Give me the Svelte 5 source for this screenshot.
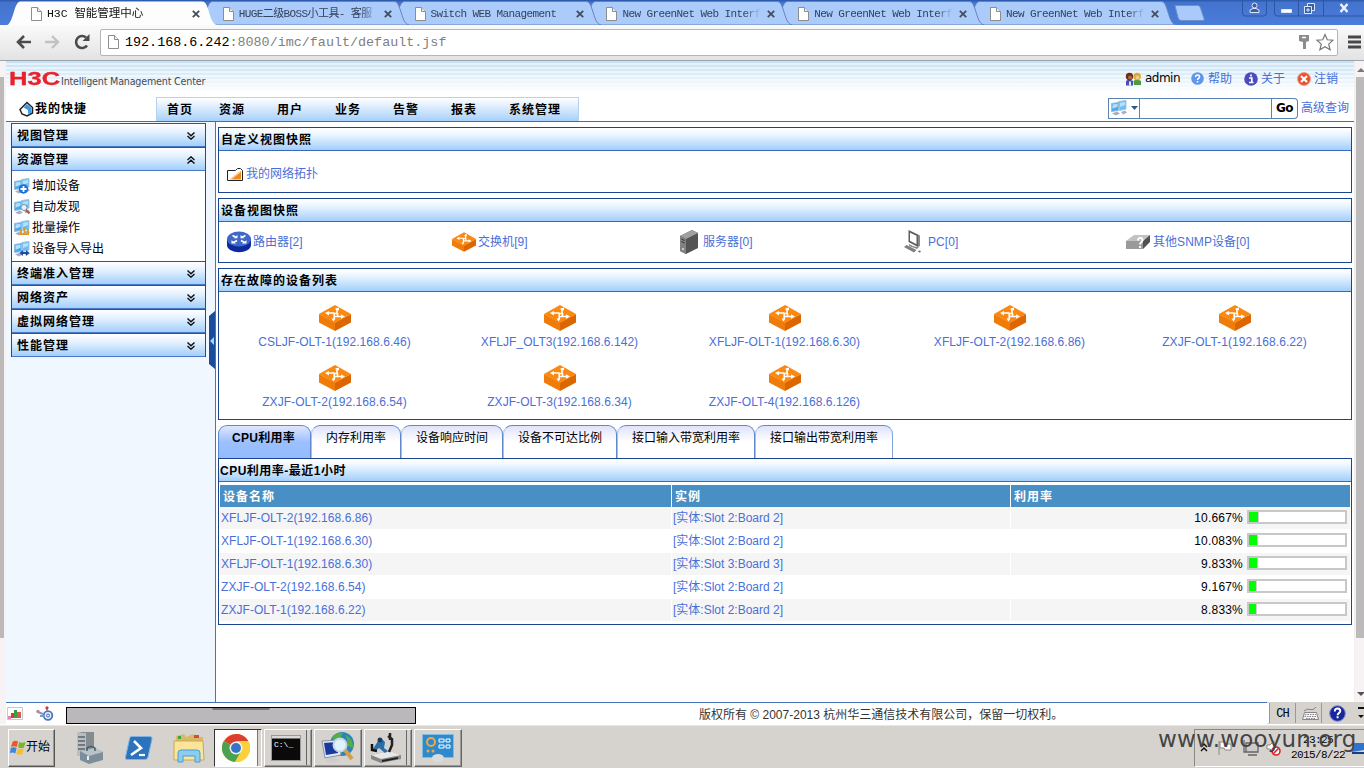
<script>
  const browserTabs = [
    { title: 'H3C 智能管理中心', active: true },
    { title: 'HUGE二级BOSS小工具- 客服' },
    { title: 'Switch WEB Management' },
    { title: 'New GreenNet Web Interf' },
    { title: 'New GreenNet Web Interf' },
    { title: 'New GreenNet Web Interf' }
  ];
  const menu = [
    { label: '首页', gap: 26 },
    { label: '资源', gap: 32 },
    { label: '用户', gap: 32 },
    { label: '业务', gap: 32 },
    { label: '告警', gap: 32 },
    { label: '报表', gap: 32 },
    { label: '系统管理', gap: 0 }
  ];
  const groups = [
    { title: '视图管理' },
    {
      title: '资源管理',
      items: [
        { label: '增加设备', kind: 'add' },
        { label: '自动发现', kind: 'find' },
        { label: '批量操作', kind: 'batch' },
        { label: '设备导入导出', kind: 'io' }
      ]
    },
    { title: '终端准入管理' },
    { title: '网络资产' },
    { title: '虚拟网络管理' },
    { title: '性能管理' }
  ];
  const views = [
    { label: '路由器[2]', kind: 'router' },
    { label: '交换机[9]', kind: 'switch' },
    { label: '服务器[0]', kind: 'server' },
    { label: 'PC[0]', kind: 'pc' },
    { label: '其他SNMP设备[0]', kind: 'other' }
  ];
  const faults = [
    'CSLJF-OLT-1(192.168.6.46)',
    'XFLJF_OLT3(192.168.6.142)',
    'XFLJF-OLT-1(192.168.6.30)',
    'XFLJF-OLT-2(192.168.6.86)',
    'ZXJF-OLT-1(192.168.6.22)',
    'ZXJF-OLT-2(192.168.6.54)',
    'ZXJF-OLT-3(192.168.6.34)',
    'ZXJF-OLT-4(192.168.6.126)'
  ];
  const perfTabs = [
    { label: 'CPU利用率', w: 93 },
    { label: '内存利用率', w: 90 },
    { label: '设备响应时间', w: 102 },
    { label: '设备不可达比例', w: 114 },
    { label: '接口输入带宽利用率', w: 138 },
    { label: '接口输出带宽利用率', w: 138 }
  ];
  const rows = [
    { name: 'XFLJF-OLT-2(192.168.6.86)', inst: '[实体:Slot 2:Board 2]', v: '10.667' },
    { name: 'XFLJF-OLT-1(192.168.6.30)', inst: '[实体:Slot 2:Board 2]', v: '10.083' },
    { name: 'XFLJF-OLT-1(192.168.6.30)', inst: '[实体:Slot 3:Board 3]', v: '9.833' },
    { name: 'ZXJF-OLT-2(192.168.6.54)', inst: '[实体:Slot 2:Board 2]', v: '9.167' },
    { name: 'ZXJF-OLT-1(192.168.6.22)', inst: '[实体:Slot 2:Board 2]', v: '8.833' }
  ];
</script>

{#snippet page()}
  <svg class="page-ico" width="11" height="14" viewBox="0 0 11 14"><path d="M.5.5h6l4 4v9H.5z" fill="#fff" stroke="#8d8d8d" /><path d="M6.5.5v4h4" fill="#eee" stroke="#8d8d8d" /></svg>
{/snippet}

{#snippet switchIcon(w, h)}
  <svg width={w} height={h} viewBox="0 0 32 26">
    <path d="M0 9 16 17.500V26L0 17.500z" fill="#ef7c08" />
    <path d="M32 9 16 17.500V26l16-8.500z" fill="#dc6602" />
    <path d="M16 0 32 9 16 18 0 9z" fill="#fb8810" />
    <path d="M18 3v5.500M8 8h7.500M15.200 8v6M16 11.500h7M15 8.500h4M18.500 8v4" fill="none" stroke="#fff" stroke-width="1.600" />
    <path d="M15.500 4 20 2.500v3zM10 6v4.500L6 8zM22 9.300v4.500l4-2.300zM12.500 13.500h4l-2 3z" fill="#fff" />
  </svg>
{/snippet}

{#snippet deviceIcon(kind)}
  {#if kind === 'router'}
    <svg width="26" height="22" viewBox="0 0 26 22">
      <path d="M1 8v6c0 9.500 24 9.500 24 0V8z" fill="#0e2a9c" />
      <ellipse cx="13" cy="8" rx="12" ry="7.500" fill="#4168c8" />
      <path d="M6.500 4.500l4 2M19.500 4.500l-4 2M7.500 11.500l3.500-2M18.500 11.500l-3.500-2" stroke="#fff" stroke-width="1.600" />
      <path d="M11.500 4v3.300H7.500zM14.500 4v3.300h4zM5.500 9.300v3.200h4.500zM20.500 9.300v3.200H16z" fill="#fff" />
    </svg>
  {:else if kind === 'switch'}
    {@render switchIcon(24, 20)}
  {:else if kind === 'server'}
    <svg width="20" height="24" viewBox="0 0 20 24">
      <path d="M1 6 13 0l6 3v15L7 24l-6-3z" fill="#545454" /><path d="M1 6 13 0l6 3L7 9z" fill="#a0a0a0" />
      <path d="M1 6l6 3v15l-6-3z" fill="#828282" /><path d="M2.500 9l3 1.500M2.500 11.500l3 1.500" stroke="#333" />
      <circle cx="4" cy="19" r="1" fill="#ddd" />
    </svg>
  {:else if kind === 'pc'}
    <svg width="22" height="24" viewBox="0 0 22 24">
      <path d="M5.500 0 15 4.500V17L5.500 12z" fill="#5e5e5e" /><path d="M7 2.800l6.500 3v8.500L7 10.800z" fill="#fff" />
      <path d="M15 4.500l2 1V16l-2 1zM6 14l5 2.500 5 .5-2 2-8-3z" fill="#8a8a8a" />
      <path d="M1 17l2.500-2 10 5-2.500 2.500z" fill="#808080" /><path d="M15 21l2-.5 1 1.500-2 .5z" fill="#666" />
    </svg>
  {:else}
    <svg width="25" height="16" viewBox="0 0 25 16">
      <path d="M0 7 8 1h16l-7 6z" fill="#c2c2c2" /><path d="M0 7h17v8H0z" fill="#9a9a9a" /><path d="M17 7l7-6v7l-7 7z" fill="#505050" />
      <path d="M12 6.500c0-4 5-3 4.500 0-.2 2-2.500 1.500-2.500 4m0 1.500v2" stroke="#fff" stroke-width="1.800" fill="none" />
    </svg>
  {/if}
{/snippet}

{#snippet pairIcon(kind)}
  <svg width="17" height="16" viewBox="0 0 17 16">
    <path d="M7.500 1.500 15 .5v8.500l-6.500 1.500z" fill="#6dbcf2" stroke="#9fc6e2" />
    <path d="M.5 3.500 7.500 2.500v8l-7 1z" fill="#4aa8ee" stroke="#93bfe0" />
    <path d="M1.500 4.500l5-.8v3l-5 2zM9 2.800l5-.8v3l-5 2z" fill="#b3e0fb" />
    <path d="M1 13.500l5-2 3 2-4 2zM10 12l4-1.500 2 2-4 2z" fill="#a9adc4" />
    {#if kind === 'add'}
      <circle cx="9.500" cy="11" r="4.700" fill="#1670de" /><path d="M9.500 8v6M6.500 11h6" stroke="#fff" stroke-width="1.800" />
    {:else if kind === 'find'}
      <circle cx="10" cy="8.500" r="3" fill="#e3f4ff" stroke="#7991a6" /><path d="M12 11l3.500 3.500" stroke="#c0522d" stroke-width="2" />
    {:else if kind === 'batch'}
      <path d="M7 9v5M10.500 7v7M14 9v5M6 14h9" stroke="#e19b2b" stroke-width="2" />
    {:else if kind === 'io'}
      <path d="M5.500 12 9 9v2h3V9l3.500 3-3.500 3v-2H9v2z" fill="#234ca0" />
    {/if}
  </svg>
{/snippet}

<div class="screen">
  <div class="tabstrip">
    <div class="tabs">
      {#each browserTabs as t, i}
        <div class="btab" class:active={t.active} style:z-index={10 - i}>
          <svg class="shape" width="212" height="25" viewBox="0 0 212 25">
            <path d="M0 25C5 24 7 8 10 4 11.500 1.500 13 1.500 15 1.500H194C197 1.500 198 2 199.500 5 203 13 204 24 210 25z" fill={t.active ? '#fdfdfd' : '#abcbfa'} stroke={t.active ? 'none' : '#6283c0'} />
          </svg>
          {@render page()}
          <span class="btitle">{t.title}</span>
          <svg class="x" width="8" height="8" viewBox="0 0 8 8"><path d="M.8.8l6.400 6.400M7.200.8.8 7.200" stroke="#444c5c" stroke-width="1.800" /></svg>
        </div>
      {/each}
      <svg class="newtab" width="32" height="16" viewBox="0 0 32 16"><path d="M1 .5h22c3 0 3 1 4 4l3 9c.3 1.500 0 2-1 2H8c-2 0-3-.5-4-3z" fill="#a9cafa" stroke="#6d90cc" /></svg>
    </div>
    <div class="winbtns">
      <svg width="122" height="20" viewBox="0 0 122 20" fill="none" stroke="#2c55a3">
        <path d="M.5 0v13q0 3 3 3h18q3 0 3-3V0M32.500 0v13q0 3 3 3H122M56.500 0v16M81.500 0v16" />
        <g stroke="#dce8fb" fill="#3d5e9c"><path d="M8 12.500v-2.500l3-1.500h3l3 1.500v2.500z" /><circle cx="12.500" cy="5.500" r="2.500" /><path d="M39.500 9.500h10v3h-10z" fill="#fff" /><path d="M65.500 3.500h7v7h-7z" /><path d="M62.500 6.500h7v7h-7zM65 9h2v2h-2z" /></g>
        <path d="M98.500 4l7 8M105.500 4l-7 8" stroke="#eaf2ff" stroke-width="2.500" />
      </svg>
    </div>
  </div>

  <div class="toolbar">
    <svg class="nav" width="76" height="16" viewBox="0 0 76 16" fill="none">
      <path d="M15 8H2M8 2 2 8l6 6" stroke="#4b4b4b" stroke-width="2.600" /><path d="M29 8h13M36 2l6 6-6 6" stroke="#c2c2c2" stroke-width="2.400" />
      <path d="M71 11.500A6 6 0 1 1 70 3.500" stroke="#4b4b4b" stroke-width="2.600" /><path d="M73.500 0v7h-7z" fill="#4b4b4b" />
    </svg>
    <div class="omnibox">
      {@render page()}
      <span class="url">192.168.6.242<i>:8080/imc/fault/default.jsf</i></span>
      <svg width="38" height="19" viewBox="0 0 38 19"><path d="M3 2h10v6l-3 1v7H7V9L3 8z" fill="#8c8c8c" /><path d="M6 4.500h4" stroke="#fff" stroke-width="1.500" /><path d="M29 1.500l2.300 5.300 5.700.4-4.300 3.900 1.400 5.700-5.100-3.100-5.100 3.100 1.400-5.700L21 7.200l5.700-.4z" fill="#fff" stroke="#777" stroke-width="1.200" /></svg>
    </div>
    <svg class="burger" width="14" height="14" viewBox="0 0 14 14"><path d="M1 2h13M1 7h13M1 12h13" stroke="#484848" stroke-width="2.800" /></svg>
  </div>

  <div class="viewport">
    <div class="edge left"><div class="thumb"></div><div class="rest"></div></div>
    <div class="app">
      <header>
        <div class="brandrow">
          <div class="brand"><b><span>H3C</span></b><em>Intelligent Management Center</em></div>
          <div class="user">
            <svg width="17" height="14" viewBox="0 0 17 14"><path d="M1 9q3-3 7 0v4.500H1z" fill="#4b4fb5" /><path d="M8.500 9q3-3 7.500 0v4H9z" fill="#4c9c3c" /><circle cx="4.500" cy="4.500" r="3.700" fill="#64301c" /><circle cx="5" cy="5.500" r="2" fill="#b5693a" /><circle cx="12.200" cy="4.500" r="3.700" fill="#dea62a" /><circle cx="12.500" cy="5.500" r="2" fill="#f3c98a" /><path d="M4 9.500h2v4H4z" fill="#dfe7ff" /></svg>
            <span class="admin">admin</span>
            <svg width="13" height="13" viewBox="0 0 13 13"><circle cx="6.500" cy="6.500" r="6.300" fill="#5f97ea" /><path d="M4.500 5c0-3 4.500-2.500 4 0-.3 1.500-2 1.200-2 3m0 1v1.500" stroke="#fff" stroke-width="1.500" fill="none" /></svg>
            <a class="a1" href="#top">帮助</a>
            <svg width="14" height="14" viewBox="0 0 14 14"><circle cx="7" cy="7" r="6.800" fill="#4b4bbd" /><path d="M5 6h2.800v4M5 10.500h4.500M7 2.500v2" stroke="#fff" stroke-width="1.700" fill="none" /></svg>
            <a class="a2" href="#top">关于</a>
            <svg width="14" height="14" viewBox="0 0 14 14"><circle cx="7" cy="7" r="6.500" fill="#e8512f" stroke="#f3a08b" /><path d="M4 4l6 6M10 4l-6 6" stroke="#fff" stroke-width="2.200" /></svg>
            <a class="a3" href="#top">注销</a>
          </div>
        </div>
        <div class="menurow">
          <div class="quick">
            <svg width="15" height="16" viewBox="0 0 15 16"><path d="M1 8.500 8 1.500l5.500 5v5.500L8 15l-5-2z" fill="#fff" stroke="#222" stroke-width="1.500" /><path d="M8 3 12.500 7v4.500L9 13V9L4.500 6.500z" fill="#3a9be8" /></svg>
            <b>我的快捷</b>
          </div>
          <nav>{#each menu as m}<b style:margin-right="{m.gap}px">{m.label}</b>{/each}</nav>
          <div class="search">
            <div class="pick">{@render pairIcon('')}<svg width="7" height="4" viewBox="0 0 7 4"><path d="M0 0h7L3.500 4z" fill="#2b5a8a" /></svg></div>
            <div class="field"></div>
            <div class="go">Go</div>
            <a href="#top">高级查询</a>
          </div>
        </div>
      </header>

      <div class="body">
        <aside>
          <div class="acc">
            {#each groups as g}
              <div class="ghead"><b>{g.title}</b>
                <svg width="8" height="8" viewBox="0 0 8 8" fill="none" stroke="#111" stroke-width="1.400">
                  {#if g.items}<path d="M.5 4 4 .8 7.500 4M.5 7.500 4 4.300l3.500 3.200" />{:else}<path d="M.5.5 4 3.700 7.500.5M.5 4 4 7.200 7.500 4" />{/if}
                </svg>
              </div>
              {#if g.items}
                <div class="gitems">
                  {#each g.items as it}<div class="gi">{@render pairIcon(it.kind)}<span>{it.label}</span></div>{/each}
                </div>
              {/if}
            {/each}
          </div>
          <svg class="handle" width="6" height="58" viewBox="0 0 6 58"><path d="M0 5 6 0v58L0 53z" fill="#1a4b9c" /><path d="M5 26v8L1 30z" fill="#8fe1ff" /></svg>
        </aside>

        <main>
          <section class="p1">
            <h2>自定义视图快照</h2>
            <div class="topo">
              <svg width="16" height="13" viewBox="0 0 16 13"><path d="M.5 2.500h8l2-2h3l2 2v10H.5z" fill="#fff" stroke="#222" /><path d="M14 3v8.500H4z" fill="#ee8a1f" /><path d="M3 11.500 13 4" stroke="#f9cf9a" stroke-width="1.500" /></svg>
              <a href="#top">我的网络拓扑</a>
            </div>
          </section>
          <section class="p2">
            <h2>设备视图快照</h2>
            <div class="views">
              {#each views as v}<div class="view"><span class="vi">{@render deviceIcon(v.kind)}</span><a href="#top">{v.label}</a></div>{/each}
            </div>
          </section>
          <section class="p3">
            <h2>存在故障的设备列表</h2>
            <div class="faults">
              {#each faults as f}<div class="fault">{@render switchIcon(32, 26)}<a class="lat" href="#top">{f}</a></div>{/each}
            </div>
          </section>
          <div class="ptabs">
            {#each perfTabs as t, i}<div class="ptab" class:on={i === 0} style:width="{t.w}px">{t.label}</div>{/each}
          </div>
          <section class="p4">
            <h2>CPU利用率-最近1小时</h2>
            <div class="grid">
              <div class="th">设备名称</div><div class="th">实例</div><div class="th">利用率</div>
              {#each rows as r, i}
                <div class="td" class:odd={i % 2 === 0}><a class="lat" href="#top">{r.name}</a></div>
                <div class="td" class:odd={i % 2 === 0}><a href="#top">{r.inst}</a></div>
                <div class="td val" class:odd={i % 2 === 0}><span>{r.v}%</span><div class="bar"><div class="fill" style:width="{parseFloat(r.v) * 0.8}px"></div></div></div>
              {/each}
            </div>
          </section>
        </main>
      </div>

      <footer>
        <svg class="f1" width="16" height="13" viewBox="0 0 16 13"><path d="M.5.5h15v12H.5z" fill="#fff" stroke="#c9c9c9" /><path d="M1 9h3v3H1z" fill="#d06" opacity=".5" /><path d="M4 6h3v5H4z" fill="#d73b32" /><path d="M7 3h3v8H7z" fill="#3b9d46" /><path d="M10 5h4v6h-4z" fill="#d85b4b" /></svg>
        <svg class="f2" width="18" height="15" viewBox="0 0 18 15"><circle cx="12" cy="9.500" r="4.300" fill="#e6eefb" stroke="#4a74bd" stroke-width="1.800" /><circle cx="12" cy="9.500" r="1.500" fill="none" stroke="#3f68b0" /><path d="M2 6l5 2M11 2v3M4 10h4" stroke="#7d97c8" stroke-width="2" /><circle cx="11" cy="1.800" r="1.600" fill="#d33" /><circle cx="2" cy="5.500" r="1.700" fill="#b88a9a" /></svg>
        <div class="censor"><i></i></div>
        <span class="copy">版权所有 © 2007-2013 杭州华三通信技术有限公司，保留一切权利。</span>
      </footer>
    </div>
    <div class="edge right">
      <svg width="9" height="16" viewBox="0 0 9 16"><path d="M2 11h8L6 7z" fill="#777" /></svg>
      <div class="thumb"></div><div class="rest"></div>
      <svg width="9" height="11" viewBox="0 0 9 11"><path d="M2 1h8L6 5z" fill="#555" /></svg>
    </div>
    <div class="lang">
      <i></i><span>CH</span>
      <div class="kb"><svg width="17" height="16" viewBox="0 0 17 16" fill="none" stroke="#858585"><path d="M2.500 7.500h12l2 7H.5z" fill="#f4f4f4" /><path d="M3 9.500h11M2.500 11.500h12M4 13.500h9" stroke-dasharray="1.500 1" /><path d="M2 6q3-3 6-1.500T14 2" /></svg></div>
      <svg class="q" width="17" height="17" viewBox="0 0 17 17"><circle cx="8.500" cy="8.500" r="7.800" fill="#16269c" stroke="#7b88d6" /><path d="M5.800 6.500c0-4.500 6-3.500 5.400-.3-.4 1.800-2.600 1.800-2.600 4m0 1v2" stroke="#fff" stroke-width="2" fill="none" /></svg>
      <svg class="m" width="8" height="16" viewBox="0 0 8 16"><path d="M2 2h6v2H2zM2 10h6L5 13z" fill="#111" /></svg>
    </div>
  </div>

  <div class="taskbar">
    <div class="start">
      <svg width="16" height="15" viewBox="0 0 16 15"><path d="M2.500 2q3-2 5.500-.5L6.800 7Q4 5.500 1 7z" fill="#e8582a" /><path d="M9 2q3 1.500 6.500 0L14 7.500q-3 1.500-6 0z" fill="#79b530" /><path d="M.8 8q3-1.500 5.800 0l-1.300 5.500Q3 12 0 13z" fill="#3a87dc" /><path d="M7.800 8.500q3 1.500 6 0l-1.500 5.500q-3 1.500-6 0z" fill="#f8bf24" /></svg>
      <span>开始</span>
    </div>
    <div class="slot">
      <svg width="30" height="32" viewBox="0 0 30 32"><path d="M3 1 9 0h11v21l-6 3H3z" fill="#848b91" /><path d="M3 1h9v23H3z" fill="#b9bec2" /><path d="M4 5h7M4 9h7M4 13h7M4 17h7" stroke="#5b646c" stroke-width="1.500" /><path d="M6 19l15-3 8 4v8l-14 4-9-4z" fill="#7d8e9a" /><path d="M6 19l15-3 8 4-14 4z" fill="#b6c3cb" /><path d="M13 19v-3q4-3 8 0v3" fill="none" stroke="#4b5962" stroke-width="1.500" /><path d="M14 24v4" stroke="#eee" stroke-width="2" /></svg>
    </div>
    <div class="slot">
      <svg width="28" height="24" viewBox="0 0 28 24"><path d="M6 .5h19q2.500 0 2 2.500l-4 18q-.5 2.500-3 2.500H2Q0 23.500.5 21l4-18Q5 .5 6 .5z" fill="#2b74bb" stroke="#7fb4e2" /><path d="M9 5l7 7-10 7" fill="none" stroke="#fff" stroke-width="2.600" /><path d="M14 19h6" stroke="#fff" stroke-width="2.200" /></svg>
    </div>
    <div class="slot">
      <svg width="32" height="30" viewBox="0 0 32 30"><path d="M3 3l8-2 2 3 7-3 3 3h7v22H2z" fill="#d9b867" /><path d="M1 8h29l1 19H1z" fill="#fae59b" stroke="#cba852" /><path d="M5 3h3v3H5z" fill="#43a047" /><path d="M21 2h5v3h-5z" fill="#d04b3b" /><path d="M5 29v-9q0-3 3-3h16q3 0 3 3v9h-5v-6H10v6z" fill="#8bcdf0" stroke="#4a9bd0" /></svg>
    </div>
    <div class="slot btn pressed stack">
      <svg width="28" height="28" viewBox="0 0 28 28"><circle cx="14" cy="14" r="14" fill="#fbd13a" /><path d="M14 14 2 7A14 14 0 0 1 26.200 7z" fill="#dc3f32" /><path d="M14 0a14 14 0 0 1 12.200 7H14z" fill="#dc3f32" /><path d="M14 14 1.800 7A14 14 0 0 0 13 28l6-11z" fill="#4aa150" /><path d="M26.200 7H14l6 10-7 11A14 14 0 0 0 26.200 7z" fill="#fbd13a" /><circle cx="14" cy="14" r="6.500" fill="#f3f3f3" /><circle cx="14" cy="14" r="5" fill="#3974c4" /></svg>
    </div>
    <div class="slot btn stack">
      <svg width="30" height="26" viewBox="0 0 30 26"><path d="M.5.5h29v25H.5z" fill="#0a0a0a" stroke="#999" /><path d="M1 1h28v2.500H1z" fill="#d9d9d9" /><text x="3" y="12" fill="#fff" font-family="Liberation Mono" font-size="8">C:\_</text></svg>
    </div>
    <div class="slot btn">
      <svg width="34" height="32" viewBox="0 0 34 32"><circle cx="21" cy="12" r="12" fill="#2c84b8" /><path d="M11 5q5-5 11-4l-3 5-6 3zM25 3q8 5 7 13l-5-2z" fill="#53ad4b" /><path d="M1 9l17-1 2 15-16 3z" fill="#dfe6ee" stroke="#8893a5" /><path d="M3 11l13-1 1 11-12 2z" fill="#173aa0" /><circle cx="19" cy="13" r="6.500" fill="#dff3ff" stroke="#c6d6e2" stroke-width="2" /><path d="M24 18l7 9" stroke="#d0a050" stroke-width="4" /><path d="M4 29l8-4 6 3-5 3z" fill="#ccc" /></svg>
    </div>
    <div class="slot btn stack">
      <svg width="32" height="30" viewBox="0 0 32 30"><path d="M1 22l19-4 11 4v4l-20 4-10-4z" fill="#888" /><path d="M1 22l19-4 11 4-20 4z" fill="#e8e8e8" /><path d="M12 27l16-3v2l-16 3z" fill="#222" /><path d="M8 8q4-3 7 1l-1 6 4 3-3 2-6-5-4 3-2-2z" fill="#2a6da8" /><circle cx="10" cy="7" r="2.500" fill="#1d3d5c" /><path d="M20 0v7M18 3l4 3v6l-3 7" stroke="#222" stroke-width="2.500" fill="none" /><path d="M2 11v6l5 1" stroke="#111" stroke-width="2.500" fill="none" /></svg>
    </div>
    <div class="slot btn">
      <svg width="32" height="28" viewBox="0 0 32 28"><path d="M.5.5h31v23H.5z" fill="#2f8acb" stroke="#7cbce6" /><circle cx="9" cy="8" r="4" fill="none" stroke="#f5a742" stroke-width="2" /><path d="M17 5h5v3h-5zM24 5h4v3h-4zM17 11h5v3h-5zM24 11h4v3h-4z" fill="none" stroke="#fff" /><circle cx="6" cy="17" r="1.500" fill="#f5a742" /><circle cx="11" cy="17" r="1.500" fill="#f5a742" /><ellipse cx="16" cy="24" rx="6" ry="4" fill="#d9dbde" /></svg>
    </div>
    <div class="tray">
      <svg width="84" height="18" viewBox="0 0 84 18" fill="none"><path d="M1 8l3-3 3 3M1 12l3-3 3 3" stroke="#111" stroke-width="1.500" /><path d="M19 2v14M20 3h5l1 2h5v6h-6l-1-2h-4z" fill="#fff" stroke="#888" /><path d="M46 4h12v9H46zM44 1v12h3M48 16h9" fill="#ccc" stroke="#666" stroke-width="1.300" /><path d="M67 6h3l4-4v12l-4-4h-3z" fill="#fff" stroke="#888" /><circle cx="76" cy="12" r="4" fill="#fff" stroke="#d22" stroke-width="1.600" /><path d="M73.500 14.500l5-5" stroke="#d22" stroke-width="1.600" /></svg>
      <div class="clock"><span>23:25</span><span>2015/8/22</span></div>
      <svg width="12" height="12" viewBox="0 0 12 12"><path d="M2 1h10v7L0 10z" fill="#2f74cb" /><path d="M0 10h12v2H0z" fill="#173f86" /></svg>
    </div>
  </div>
  <div class="watermark">www.wooyun.org</div>
</div>

<style>
  :global(body) { margin: 0; }
  .screen { position: relative; width: 1364px; height: 768px; overflow: hidden; display: flex; flex-direction: column; font: 12px/16px "Liberation Sans", "Noto Sans CJK SC", sans-serif; color: #000; background: #fff; }
  .screen :global(svg) { display: block; flex: none; }
  a { color: #4a6fd8; text-decoration: none; white-space: nowrap; }
  b { letter-spacing: 1px; white-space: nowrap; }

  .tabstrip { height: 25px; flex: none; display: flex; justify-content: space-between; background: linear-gradient(#2e5cb0 0 1px, #4373cd 2px, #4a7cda); }
  .tabs { display: flex; padding-left: 15px; height: 25px; }
  .btab { position: relative; width: 191.800px; flex: none; box-sizing: border-box; display: flex; align-items: center; padding: 2px 0 0 16px; color: #33415c; }
  .btab.active { color: #111; }
  .shape { position: absolute; left: -8px; top: 0; }
  .btab > :global(.page-ico), .btitle, .x { position: relative; }
  .btitle { margin-left: 5px; width: 139px; overflow: hidden; white-space: nowrap; font: 11px/16px "Liberation Mono", "Noto Sans CJK SC", monospace; letter-spacing: -.6px; mask-image: linear-gradient(90deg, #000 88%, transparent); }
  .active .btitle { font-size: 11.500px; letter-spacing: -.05px; }
  .x { margin-left: 6px; }
  .newtab { margin: 5px 0 0 8px; }
  .winbtns { width: 122px; overflow: hidden; }
  .toolbar { height: 36px; flex: none; box-sizing: border-box; display: flex; align-items: center; background: linear-gradient(#fbfafa, #e4e3e3); border-bottom: 1px solid #9fa5ad; padding: 0 0 1px 16px; }
  .omnibox { margin-left: 8px; width: 1238px; height: 27px; box-sizing: border-box; display: flex; align-items: center; background: #fff; border: 1px solid #b9b4b0; border-radius: 2px; padding: 0 3px 0 7px; }
  .url { flex: 1; margin: 2px 0 0 6px; font: 13.400px/18px "Liberation Mono", monospace; }
  .url i { font-style: normal; color: #808080; }
  .burger { margin-left: 9px; }

  .viewport { position: relative; flex: none; height: 663px; display: flex; background: #fff; }
  .edge { flex: none; display: flex; flex-direction: column; background: #f7f2f3; }
  .edge.left { width: 6px; }
  .edge.left .thumb { width: 4px; margin-top: 16px; height: 561px; background: #bdb9b8; }
  .edge.right { width: 10px; border-left: 1px solid #f1eeee; box-sizing: border-box; }
  .edge.right .thumb { height: 561px; margin-left: 1px; background: #bcbaba; }
  .edge.right .rest { height: 53px; }
  .app { width: 1348px; flex: none; display: flex; flex-direction: column; }
  header { height: 61px; flex: none; box-sizing: border-box; border-bottom: 1px solid #3f6fb3; background: linear-gradient(rgba(255, 255, 255, 0), #fff 31px), repeating-linear-gradient(#c5e1f5 0 2px, #e2f1fc 2px 4px); }
  .brandrow { height: 36px; display: flex; justify-content: space-between; }
  .brand { display: flex; padding-top: 8px; }
  .brand b { width: 55px; height: 20px; padding: 0 0 0 3px; box-sizing: border-box; color: #e8222b; font-size: 18px; line-height: 21px; letter-spacing: 0; }
  .brand span { display: inline-block; transform: scaleX(1.420); transform-origin: 0 0; -webkit-text-stroke: .3px #e8222b; }
  .brand em { font: 9.600px/26px "DejaVu Sans", sans-serif; color: #444c55; letter-spacing: -.2px; font-style: normal; }
  .user { display: flex; align-items: center; padding-right: 16px; height: 35px; font-size: 12px; }
  .admin { font: 12px/16px "DejaVu Sans"; letter-spacing: -.5px; margin: -1px 11px 0 3px; width: 35px; }
  .a1 { margin: 0 12px 0 4px; } .a2 { margin: 0 12px 0 3px; } .a3 { margin-left: 3px; }
  .menurow { height: 24px; display: flex; }
  .quick { width: 150px; box-sizing: border-box; display: flex; align-items: center; padding-left: 13px; font-size: 12px; }
  .quick b { margin-left: 1px; }
  nav { width: 423px; box-sizing: border-box; display: flex; align-items: center; padding: 0 0 0 10px; border: 1px solid #b6d2ee; border-bottom: 0; background: linear-gradient(#fff, #a8d0fa); }
  .search { margin-left: auto; display: flex; align-items: center; height: 22px; padding-right: 5px; }
  .search > div { height: 21px; box-sizing: border-box; border: 1px solid #5c82b4; display: flex; align-items: center; background: #fff; }
  .search .pick { width: 32px; padding-left: 2px; gap: 3px; }
  .search .field { width: 132px; border-left: 0; }
  .search .go { width: 26px; border-left: 0; border-radius: 0 4px 4px 0; justify-content: center; font: bold 12px "DejaVu Sans"; letter-spacing: -.5px; }
  .search a { margin-left: 3px; }

  .body { height: 580px; flex: none; display: flex; }
  aside { position: relative; width: 210px; flex: none; box-sizing: border-box; border-right: 1px solid #4673bb; background: #f0f7ff; padding: 1px 0 0 5px; }
  .acc { width: 195px; box-sizing: border-box; border: 1px solid #1f4a9c; border-top: 0; border-bottom: 0; background: #fff; }
  .ghead { height: 24px; box-sizing: border-box; border-top: 1px solid #2854a4; border-bottom: 1px solid #4878c6; background: linear-gradient(#fff, #e6f2ff 35%, #a2cffa); display: flex; align-items: center; justify-content: space-between; padding: 2px 10px 0 5px; }
  .gitems { height: 90px; box-sizing: border-box; padding: 4px 0 0 2px; }
  .gi { height: 21px; display: flex; align-items: center; gap: 1px; }
  .handle { position: absolute; right: 0; top: 189px; }

  main { width: 1134px; margin-left: 2px; padding-top: 5px; }
  section { box-sizing: border-box; width: 1134px; border: 1px solid #1c458f; }
  h2 { margin: 0; height: 23px; box-sizing: border-box; border-bottom: 1px solid #3a68ba; background: linear-gradient(#fff 5%, #e6f3ff 35%, #a2cffa); font-size: 12px; line-height: 24px; letter-spacing: 1px; padding-left: 2px; }
  .p1 { height: 66px; } .p2 { height: 65px; margin-top: 5px; } .p3 { height: 152px; margin-top: 5px; }
  .topo { display: flex; align-items: center; gap: 3px; padding: 15px 0 0 8px; }
  .views { display: grid; grid-template-columns: repeat(5, 225px); height: 41px; }
  .view { display: flex; align-items: center; padding: 0 0 2px 7px; }
  .view a { letter-spacing: .05px; }
  .vi { width: 27px; display: flex; justify-content: center; flex: none; position: relative; left: -1px; }
  .faults { display: grid; grid-template-columns: repeat(5, 225px); padding: 13px 0 0 3px; }
  .fault { height: 60px; display: flex; flex-direction: column; align-items: center; gap: 3px; }
  .lat { letter-spacing: .06px; }
  .ptabs { display: flex; height: 33px; margin-top: 5px; }
  .ptab { box-sizing: border-box; height: 33px; border: 1px solid #5f87cb; border-bottom: 0; border-left-color: #a9c0e6; border-radius: 9px 9px 0 0; background: linear-gradient(#dfe3fb, #fff 50%); text-align: center; line-height: 24px; white-space: nowrap; }
  .ptab:last-child { border-right-color: #7fa5d8; }
  .ptab.on { background: linear-gradient(#e0e6fd, #9bc0ff 50%, #94bbfd); font-weight: bold; letter-spacing: .3px; padding-right: 2px; border-left-color: #5f87cb; }
  .p4 { height: 167px; }
  .p4 h2 { letter-spacing: .5px; padding-left: 1px; }
  .grid { display: grid; grid-template-columns: 451px 338px 339px; column-gap: 1px; padding: 3px 0 0 1px; grid-template-rows: 22px repeat(5, 23px); }
  .th { background: #488fc5; color: #fff; font-weight: bold; letter-spacing: 1px; line-height: 24px; padding-left: 3px; }
  .td { display: flex; align-items: center; padding: 0 0 1px 1px; }
  .td.odd { background: #f5f5f5; border-bottom: 1px solid #fff; padding-bottom: 0; }
  .val { justify-content: flex-end; padding-right: 3px; gap: 4px; letter-spacing: .2px; }
  .bar { width: 100px; height: 14px; box-sizing: border-box; border: 2px solid #c8c8c8; background: #fff; margin-top: -2px; }
  .fill { height: 100%; background: #0f0; border-right: 1px solid #d0d0d0; }

  footer { height: 22px; flex: none; display: flex; align-items: center; border-top: 1px solid #4673bb; box-sizing: border-box; background: #fff; }
  .f1 { margin-left: 1px; } .f2 { margin-left: 13px; }
  .censor { margin: 4px 0 0 12px; width: 350px; height: 17px; box-sizing: border-box; border: 1px solid #000; background: #bbb8bc; display: flex; justify-content: center; }
  .censor i { width: 58px; height: 2px; background: #77757a; border-radius: 0 0 20px 20px; }
  .copy { margin: 3px 0 0 283px; color: #333; white-space: nowrap; }
  .lang { position: absolute; right: 0; top: 641px; width: 97px; height: 22px; display: flex; align-items: center; background: #d6d3ce; }
  .lang i { width: 2px; height: 20px; background: #fff; border-right: 1px solid #999; }
  .lang span { width: 25px; height: 20px; border-right: 1px solid #999; margin-left: 0; text-align: center; font: 12px/22px "Liberation Mono"; letter-spacing: -1px; }
  .kb { width: 26px; height: 20px; box-sizing: border-box; padding: 2px 0 0 6px; border-right: 1px solid #999; } .q { margin-left: 7px; } .m { margin-left: auto; }

  .taskbar { height: 44px; flex: none; box-sizing: border-box; display: flex; align-items: center; background: #d6d3ce; border-top: 1px solid #fff; padding: 2px 0 0 8px; box-shadow: inset 0 1px #e8e6e3; }
  .start { width: 47px; height: 38px; box-sizing: border-box; border: 1px solid; border-color: #fff #555 #555 #fff; box-shadow: inset -1px -1px #999; display: flex; align-items: center; padding-left: 1px; gap: 0; margin-right: 9px; }
  .start span { white-space: nowrap; margin-top: -1px; }
  .slot { width: 50px; height: 38px; box-sizing: border-box; display: flex; align-items: center; justify-content: center; flex: none; }
  .btn { width: 48px; margin-right: 2px; border: 1px solid; border-color: #fff #666 #666 #fff; box-shadow: inset -1px -1px #999; }
  .stack { box-shadow: inset -1px -1px #999, inset -4px 0 #d6d3ce, inset -5px 0 #666; padding-right: 4px; }
  .pressed { background: #fdfdfd; border-color: #333 #fff #fff #333; box-shadow: inset -3px 0 #d6d3ce, inset -4px 0 #777; }
  .tray { margin-left: auto; width: 170px; height: 38px; box-sizing: border-box; border-top: 1px solid #888; border-left: 1px solid #888; border-bottom: 1px solid #fff; display: flex; align-items: center; padding-left: 5px; }
  .clock { width: 64px; display: flex; flex-direction: column; align-items: center; font: 11px/15px "Liberation Mono", monospace; letter-spacing: -.6px; margin-left: 2px; }
  .clock + :global(svg) { margin-left: auto; }
  .watermark { position: absolute; left: 1158px; top: 724px; font: 23px/30px "DejaVu Sans", sans-serif; letter-spacing: .15px; color: #444; white-space: nowrap; }
</style>
